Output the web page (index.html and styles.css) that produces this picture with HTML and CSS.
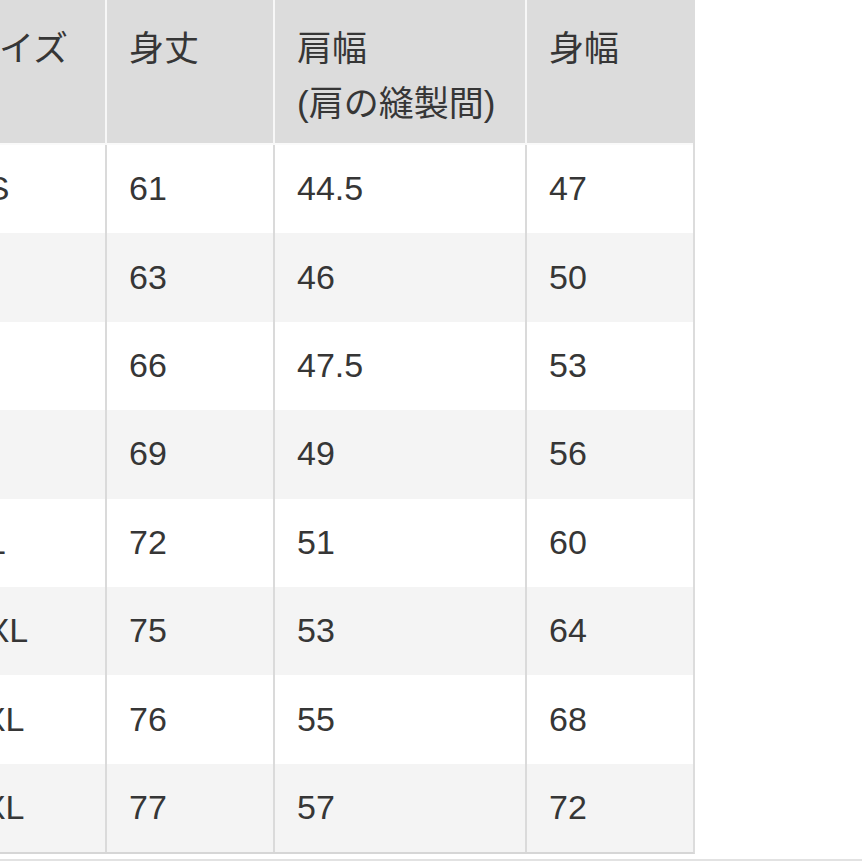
FILE: index.html
```html
<!DOCTYPE html>
<html lang="ja">
<head>
<meta charset="utf-8">
<link rel="stylesheet" href="styles.css">
</head>
<body>
<div class="page">
  <table class="size-table">
    <thead>
      <tr>
        <th class="c1">サイズ</th>
        <th class="c2">身丈</th>
        <th class="c3">肩幅<br>(肩の縫製間)</th>
        <th class="c4">身幅</th>
      </tr>
    </thead>
    <tbody>
      <tr><td>XS</td><td>61</td><td>44.5</td><td>47</td></tr>
      <tr class="alt"><td>S</td><td>63</td><td>46</td><td>50</td></tr>
      <tr><td>M</td><td>66</td><td>47.5</td><td>53</td></tr>
      <tr class="alt"><td>L</td><td>69</td><td>49</td><td>56</td></tr>
      <tr><td>XL</td><td>72</td><td>51</td><td>60</td></tr>
      <tr class="alt"><td>XXL</td><td>75</td><td>53</td><td>64</td></tr>
      <tr><td>3XL</td><td>76</td><td>55</td><td>68</td></tr>
      <tr class="alt"><td>4XL</td><td>77</td><td>57</td><td>72</td></tr>
    </tbody>
  </table>
  <div class="rule"></div>
</div>
</body>
</html>
```
FILE: styles.css
```css
html, body {
  margin: 0;
  padding: 0;
  background: #ffffff;
}

.page {
  width: 862px;
  height: 862px;
  overflow: hidden;
  font-family: "Liberation Sans", "Noto Sans CJK JP", sans-serif;
  color: #363636;
}

.size-table {
  border-collapse: separate;
  border-spacing: 0;
  margin-left: -52px;
  margin-top: -2px;
  table-layout: fixed;
  border-right: 2px solid #dcdcdc;
  border-bottom: 2px solid #d6d6d6;
}

.size-table th {
  background: #dcdcdc;
  font-weight: normal;
  font-size: 35px;
  text-align: left;
  vertical-align: top;
  line-height: 55px;
  padding: 23px 10px 12px 22px;
  border-left: 2px solid #f7f7f7;
  border-bottom: 2px solid #fafafa;
}

.size-table th.c1 {
  border-left: none;
  width: 131px;
  padding-left: 16px;
}

.size-table th.c2 { width: 134px; }
.size-table th.c3 { width: 218px; }
.size-table th.c4 { width: 134px; }

.size-table td {
  height: 86.4px;
  font-size: 34px;
  padding: 0 10px 2px 22px;
  line-height: 40px;
  vertical-align: middle;
  border-left: 2px solid #dadada;
  background: #ffffff;
}

.size-table td:first-child {
  border-left: none;
  padding-left: 16px;
}

.size-table tr.alt td {
  background: #f4f4f4;
}

.rule {
  height: 0;
  margin-top: 5px;
  border-top: 2px solid #e2e2e2;
}
```
